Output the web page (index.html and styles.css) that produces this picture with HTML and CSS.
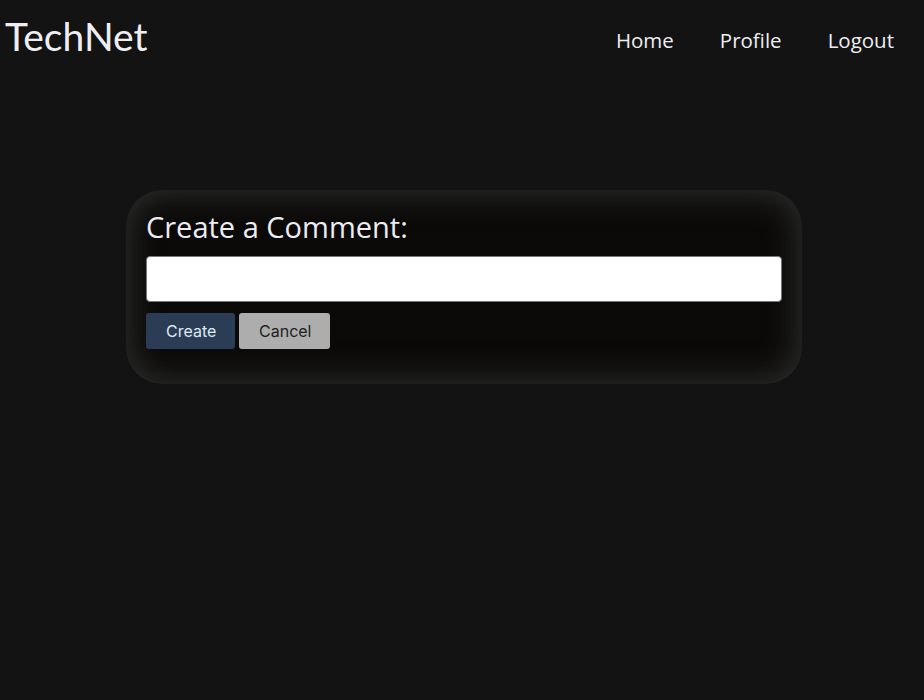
FILE: index.html
```html
<!DOCTYPE html>
<html lang="en">
<head>
<meta charset="utf-8">
<title>TechNet</title>
<link rel="stylesheet" href="styles.css">
</head>
<body>
<header class="topbar">
  <div class="brand">TechNet</div>
  <nav class="nav">
    <a href="#" class="nav-link">Home</a>
    <a href="#" class="nav-link">Profile</a>
    <a href="#" class="nav-link">Logout</a>
  </nav>
</header>
<main class="main">
  <form class="card">
    <h2 class="card-title">Create a Comment:</h2>
    <input class="comment-input" type="text">
    <div class="actions">
      <button type="button" class="btn btn-create">Create</button>
      <button type="button" class="btn btn-cancel">Cancel</button>
    </div>
  </form>
</main>
</body>
</html>
```
FILE: styles.css
```css
* { box-sizing: border-box; }
html, body { height: 100%; }
body {
  margin: 0;
  background: #131313;
  color: #e8e8ee;
  font-family: "Open Sans", "DejaVu Sans", sans-serif;
}
.topbar {
  display: flex;
  justify-content: space-between;
  align-items: flex-start;
  padding: 13px 30px 0 5px;
}
.brand {
  font-family: Lato, sans-serif;
  font-size: 39px;
  line-height: 46px;
  color: #eeeef4;
}
.nav {
  display: flex;
  gap: 46px;
  padding-top: 13px;
}
.nav-link {
  color: #eeeef2;
  text-decoration: none;
  font-size: 20.5px;
  line-height: 28px;
}
.main {
  padding-top: 131px;
  padding-left: 4px;
}
.card {
  width: 676px;
  margin: 0 auto;
  padding: 20px 20px 35px;
  border-radius: 36px;
  background: #0b0a09;
  box-shadow: inset 0 0 30px 6px #2b2b2b;
}
.card-title {
  margin: 0 0 12px;
  font-weight: 400;
  font-size: 29px;
  line-height: 34px;
  color: #ececf2;
}
.comment-input {
  display: block;
  width: 100%;
  height: 46px;
  border: 1px solid #777;
  border-radius: 4px;
  background: #fff;
  margin: 0;
}
.actions {
  display: flex;
  gap: 4px;
  margin-top: 11px;
}
.btn {
  height: 36px;
  padding: 0 20px;
  border: none;
  border-radius: 3px;
  font-family: Inter, Roboto, sans-serif;
  font-size: 16px;
}
.btn-create {
  width: 89px;
  background: #2b3d55;
  color: #dfe9f2;
}
.btn-cancel {
  width: 91px;
  background: #adadad;
  color: #1d1d1d;
}
```
